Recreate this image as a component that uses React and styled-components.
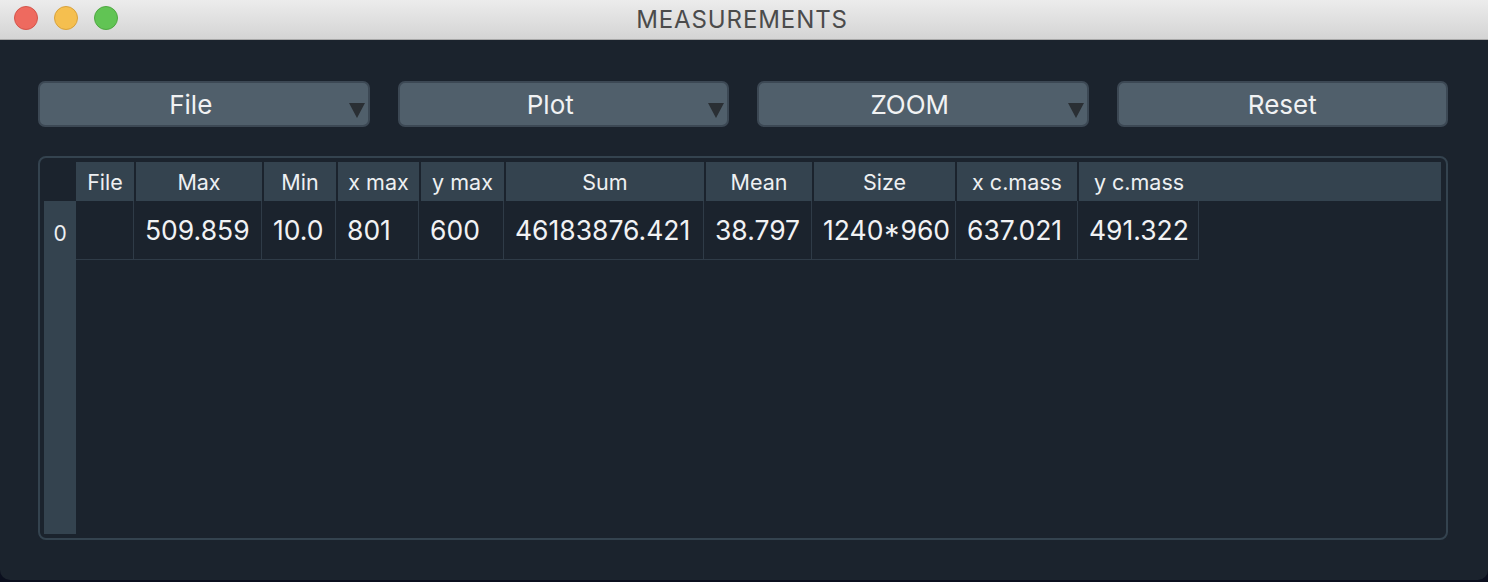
import React from "react";
import styled, { createGlobalStyle } from "styled-components";

const GlobalStyle = createGlobalStyle`
  html, body {
    margin: 0;
    padding: 0;
    background: #0b0f1e;
  }
  body {
    font-family: Inter, "Noto Sans", "Liberation Sans", sans-serif;
  }
`;

const Window = styled.div`
  width: 1488px;
  height: 580px;
  display: flex;
  flex-direction: column;
  background: #1b232d;
  border-radius: 0 0 10px 10px;
  overflow: hidden;
`;

const TitleBar = styled.div`
  position: relative;
  height: 39px;
  flex-shrink: 0;
  display: flex;
  align-items: center;
  justify-content: center;
  background: linear-gradient(#ececec, #d4d4d4);
  border-bottom: 1px solid #a8a8a8;
`;

const Lights = styled.div`
  position: absolute;
  left: 14px;
  top: 6px;
  display: flex;
  gap: 16px;
`;

const Light = styled.span`
  width: 22px;
  height: 22px;
  border-radius: 50%;
  background: ${(p) => p.$fill};
  border: 1px solid ${(p) => p.$edge};
`;

const Title = styled.div`
  font-size: 24px;
  letter-spacing: 0.9px;
  color: #4b4b4b;
  margin-left: -4px;
`;

const Content = styled.div`
  flex: 1;
  display: flex;
  flex-direction: column;
  padding: 41px 40px 40px 38px;
  gap: 29px;
`;

const Toolbar = styled.div`
  display: grid;
  grid-template-columns: repeat(4, 1fr);
  gap: 28px;
`;

const ToolButton = styled.div`
  position: relative;
  height: 46px;
  box-sizing: border-box;
  display: flex;
  align-items: center;
  justify-content: center;
  padding-right: ${(p) => (p.$menu ? "26px" : "0")};
  background: #505f6b;
  border: 2px solid #3c4854;
  border-radius: 7px;
  color: #f1f2f3;
  font-size: 26px;
`;

const Arrow = styled.span`
  position: absolute;
  right: 3px;
  top: 20px;
  width: 0;
  height: 0;
  border-left: 8px solid transparent;
  border-right: 8px solid transparent;
  border-top: 15px solid #2a2f34;
`;

const Frame = styled.div`
  flex: 1;
  display: flex;
  flex-direction: column;
  border: 2px solid #34434f;
  border-radius: 8px;
  padding: 4px 5px 4px 4px;
`;

const HeadRow = styled.div`
  display: flex;
  height: 39px;
  flex-shrink: 0;
`;

const Corner = styled.div`
  width: 32px;
  flex-shrink: 0;
`;

const HeadCell = styled.div`
  width: ${(p) => p.$w}px;
  flex-shrink: 0;
  box-sizing: border-box;
  display: flex;
  align-items: center;
  justify-content: center;
  background: #34434f;
  border-right: ${(p) => (p.$last ? "none" : "2px solid #1b232d")};
  color: #eef0f2;
  font-size: 21.5px;
`;

const HeadFill = styled.div`
  flex: 1;
  background: #34434f;
`;

const Body = styled.div`
  flex: 1;
  display: flex;
`;

const RowHeads = styled.div`
  width: 32px;
  flex-shrink: 0;
  background: #34434f;
`;

const RowHead = styled.div`
  height: 59px;
  box-sizing: border-box;
  padding-top: 5px;
  display: flex;
  align-items: center;
  justify-content: center;
  color: #eef0f2;
  font-size: 21px;
`;

const Rows = styled.div`
  flex: 1;
`;

const DataRow = styled.div`
  display: flex;
  height: 59px;
`;

const DataCell = styled.div`
  width: ${(p) => p.$w}px;
  flex-shrink: 0;
  box-sizing: border-box;
  display: flex;
  align-items: center;
  padding-left: 11px;
  border-right: 1px solid #2f3b47;
  border-bottom: 1px solid #2f3b47;
  color: #f1f2f4;
  font-size: 26.5px;
  white-space: nowrap;
`;

const headers = [
  ["File", 60],
  ["Max", 128],
  ["Min", 74],
  ["x max", 83],
  ["y max", 85],
  ["Sum", 200],
  ["Mean", 108],
  ["Size", 143],
  ["x c.mass", 122],
  ["y c.mass", 120],
];

const dataWidths = [58, 128, 74, 83, 85, 200, 108, 144, 122, 121];

const rows = [
  ["", "509.859", "10.0", "801", "600", "46183876.421", "38.797", "1240*960", "637.021", "491.322"],
];

export default function App() {
  return (
    <>
      <GlobalStyle />
      <Window>
        <TitleBar>
          <Lights>
            <Light $fill="#ee6a5f" $edge="#d4554b" />
            <Light $fill="#f5bf4f" $edge="#d8a23c" />
            <Light $fill="#61c454" $edge="#4fa842" />
          </Lights>
          <Title>MEASUREMENTS</Title>
        </TitleBar>
        <Content>
          <Toolbar>
            <ToolButton $menu>
              File
              <Arrow />
            </ToolButton>
            <ToolButton $menu>
              Plot
              <Arrow />
            </ToolButton>
            <ToolButton $menu>
              ZOOM
              <Arrow />
            </ToolButton>
            <ToolButton>Reset</ToolButton>
          </Toolbar>
          <Frame>
            <HeadRow>
              <Corner />
              {headers.map(([label, w], i) => (
                <HeadCell key={label} $w={w} $last={i === headers.length - 1}>
                  {label}
                </HeadCell>
              ))}
              <HeadFill />
            </HeadRow>
            <Body>
              <RowHeads>
                {rows.map((r, i) => (
                  <RowHead key={i}>{i}</RowHead>
                ))}
              </RowHeads>
              <Rows>
                {rows.map((r, i) => (
                  <DataRow key={i}>
                    {r.map((v, j) => (
                      <DataCell key={j} $w={dataWidths[j]}>
                        {v}
                      </DataCell>
                    ))}
                  </DataRow>
                ))}
              </Rows>
            </Body>
          </Frame>
        </Content>
      </Window>
    </>
  );
}
